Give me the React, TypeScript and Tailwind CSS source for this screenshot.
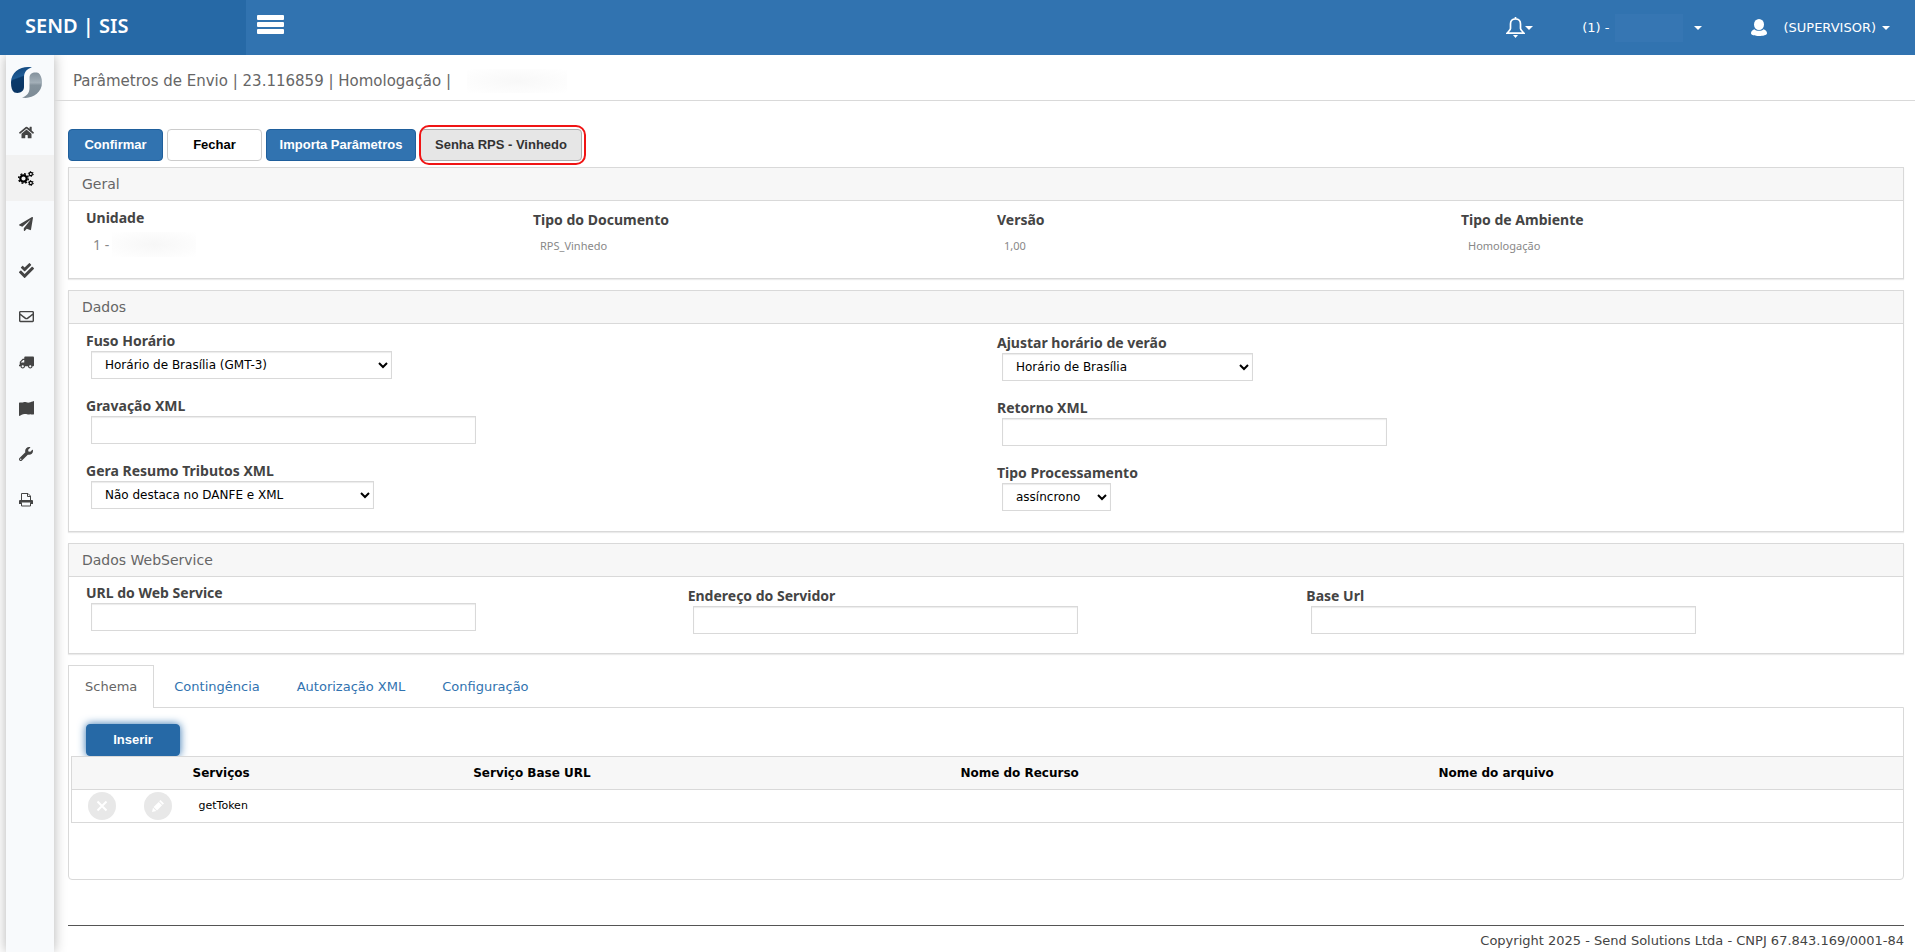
import type { ReactNode } from "react";
import {
  FaCheckDouble,
  FaHome,
  FaPaperPlane,
  FaRegEnvelope,
  FaTruck,
  FaWrench,
} from "react-icons/fa";

const verdana = "font-['Verdana','DejaVu_Sans',sans-serif]";
const labelText =
  "block font-['Trebuchet_MS','Noto_Sans',sans-serif] text-[14px] font-bold leading-[20px] text-[#444]";
const fieldBox =
  "ml-[5px] block h-[28px] border border-[#d9d9d9] bg-white text-[12px] text-black shadow-[inset_0_1px_1px_rgba(0,0,0,0.08)]";

function Caret() {
  return (
    <svg viewBox="0 0 8 4" className="h-[4px] w-[8px] shrink-0" fill="currentColor" aria-hidden="true">
      <path d="M0 0h8L4 4z" />
    </svg>
  );
}

function BrandLogo() {
  return (
    <svg viewBox="0 0 62 62" className="h-[31px] w-[31px]" aria-hidden="true">
      <defs>
        <linearGradient id="blue" x1="0" y1="0" x2="0.3" y2="1">
          <stop offset="0" stopColor="#0d3f73" />
          <stop offset="0.45" stopColor="#1f5c96" />
          <stop offset="0.5" stopColor="#0a3a6b" />
          <stop offset="1" stopColor="#0a3563" />
        </linearGradient>
        <linearGradient id="grey" x1="0" y1="0" x2="0" y2="1">
          <stop offset="0" stopColor="#83919c" />
          <stop offset="0.4" stopColor="#a3afb8" />
          <stop offset="0.5" stopColor="#84929c" />
          <stop offset="1" stopColor="#7d8b96" />
        </linearGradient>
      </defs>
      <path
        d="M42 1C22-3 0 9 0 31c0 10 2 17 7 20 10 3 19-2 19-11V21C26 10 32 3 42 1z"
        fill="url(#blue)"
      />
      <path
        d="M22 61c18 4 40-8 40-30 0-9-3-16-7-19-10-3-18 1-18 9v21c0 10-6 17-15 19z"
        fill="url(#grey)"
      />
    </svg>
  );
}

function GearsIcon() {
  return (
    <svg viewBox="0 0 16 15" className="h-[15px] w-[16px]" fill="none" stroke="currentColor" aria-hidden="true">
      <circle cx="5.500" cy="7.500" r="3.200" strokeWidth="2.200" />
      <circle cx="5.500" cy="7.500" r="4.800" strokeWidth="1.500" strokeDasharray="1.900 1.870" />
      <circle cx="12.800" cy="3" r="1.600" strokeWidth="1.200" />
      <circle cx="12.800" cy="3" r="2.500" strokeWidth="1" strokeDasharray="1.300 1.318" />
      <circle cx="12.800" cy="12" r="1.600" strokeWidth="1.200" />
      <circle cx="12.800" cy="12" r="2.500" strokeWidth="1" strokeDasharray="1.300 1.318" />
    </svg>
  );
}

function MapIcon() {
  return (
    <svg viewBox="0 0 15 15" className="h-[15px] w-[15px]" fill="currentColor" aria-hidden="true">
      <path d="M0 1.800C2 1 3 2 4.500 1.200 6 .3 8 2 10 1.600S13 .5 15 0v13.200c-2 .8-3-.4-4.500.2S7.500 12.600 5.500 13 2 14.200 0 15z" />
    </svg>
  );
}

function PrintIcon() {
  return (
    <svg viewBox="0 0 14 14" className="h-[14px] w-[14px]" fill="none" stroke="currentColor" aria-hidden="true">
      <path d="M2.500 7V.5h6.500l2.500 2.500v4M8.500.5V3.500h3" />
      <path d="M0 11V7.500L1 7h12l1 .5V11h-2.500V9.500h-9V11z" fill="currentColor" stroke="none" />
      <path d="M2.500 9.500v3.500h9V9.500" />
    </svg>
  );
}

function BellIcon() {
  return (
    <svg viewBox="0 0 19 21" className="h-[21px] w-[19px]" fill="none" stroke="currentColor" strokeWidth="1.700" aria-hidden="true">
      <path d="M9.500 2C6.500 2 4.500 4 4.500 7v4.500c0 1.500-1.800 2.500-3.500 4.700h17c-1.700-2.200-3.500-3.200-3.500-4.700V7c0-3-2-5-5-5z" />
      <path d="M9.500 0v2" />
      <path d="M7 18h5l-2.500 3z" fill="currentColor" stroke="none" />
    </svg>
  );
}

function UserIcon() {
  return (
    <svg viewBox="0 0 16 17" className="h-[17px] w-[16px]" fill="currentColor" aria-hidden="true">
      <ellipse cx="8" cy="5.500" rx="5" ry="5.500" />
      <path d="M3.500 10.200C5 12.300 11 12.300 12.500 10.200 15 11 16 12.500 16 14.200 16 16 12 17 8 17s-8-1-8-2.800c0-1.700 1-3.200 3.500-4z" />
    </svg>
  );
}

const menu = [
  { name: "Início", icon: <FaHome size={15} /> },
  { name: "Parâmetros", icon: <GearsIcon />, active: true },
  { name: "Envio", icon: <FaPaperPlane size={14} /> },
  { name: "Validação", icon: <FaCheckDouble size={15} /> },
  { name: "E-mail", icon: <FaRegEnvelope size={15} /> },
  { name: "Transporte", icon: <FaTruck size={15} className="-scale-x-100" /> },
  { name: "Mapa", icon: <MapIcon /> },
  { name: "Ferramentas", icon: <FaWrench size={14} /> },
  { name: "Impressão", icon: <PrintIcon /> },
];

function Sidebar() {
  return (
    <aside className="ml-[6px] w-[48px] shrink-0 bg-[#f8fafc] shadow-[0_0_12px_rgba(0,0,0,0.3)]">
      <div className="flex h-[54px] items-center pl-[5px]">
        <BrandLogo />
      </div>
      <nav>
        {menu.map((item) => (
          <a
            key={item.name}
            href="#"
            aria-label={item.name}
            className={
              item.active
                ? "flex h-[46px] items-center justify-center bg-[#f2f2f2] pr-[8px] text-black"
                : "flex h-[46px] items-center justify-center pr-[8px] text-[#444]"
            }
          >
            {item.icon}
          </a>
        ))}
      </nav>
    </aside>
  );
}

function Header() {
  return (
    <header className="relative z-10 flex h-[55px] items-center bg-[#3173b0] text-[13px] text-white">
      <a
        href="#"
        className="flex h-full w-[246px] items-center bg-[#2669a6] pb-[3px] pl-[25px] font-['Trebuchet_MS','Noto_Sans',sans-serif] text-[20px] font-semibold"
      >
        SEND | SIS
      </a>
      <button type="button" aria-label="Alternar menu" className="mb-[7px] ml-[11px] flex flex-col gap-[2px]">
        <span className="h-[5px] w-[27px] rounded-[1px] bg-white" />
        <span className="h-[5px] w-[27px] rounded-[1px] bg-white" />
        <span className="h-[5px] w-[27px] rounded-[1px] bg-white" />
      </button>
      <div className="ml-auto flex items-center pr-[25px]">
        <button type="button" aria-label="Notificações" className="mr-[49px] flex items-center">
          <BellIcon />
          <Caret />
        </button>
        <button type="button" className="mr-[49px] flex items-center">
          <span className="whitespace-nowrap">(1) -</span>
          <span className="mr-[11px] ml-[6px] h-[28px] w-[68px] bg-[#3676b3]" />
          <Caret />
        </button>
        <button type="button" className="flex items-center">
          <UserIcon />
          <span className="mr-[6px] ml-[16px]">(SUPERVISOR)</span>
          <Caret />
        </button>
      </div>
    </header>
  );
}

function Panel({ title, children }: { title: string; children: ReactNode }) {
  return (
    <section className="mb-[11px] overflow-hidden border border-[#d9d9d9] bg-white shadow-[0_1px_1px_rgba(0,0,0,0.08)]">
      <h2 className="flex h-[33px] items-center border-b border-[#d9d9d9] bg-[#f7f7f7] pl-[13px] text-[14px] text-[#666]">
        {title}
      </h2>
      <div className="-mr-[22px]">{children}</div>
    </section>
  );
}

function TextField({ id, label }: { id: string; label: string }) {
  return (
    <div>
      <label htmlFor={id} className={labelText}>
        {label}
      </label>
      <input id={id} type="text" className={`${fieldBox} w-[385px] px-[10px]`} />
    </div>
  );
}

function SelectField({ id, label, value, width }: { id: string; label: string; value: string; width: string }) {
  return (
    <div>
      <label htmlFor={id} className={labelText}>
        {label}
      </label>
      <select id={id} className={`${fieldBox} ${width} pl-[9px]`}>
        <option>{value}</option>
      </select>
    </div>
  );
}

function Info({ label, children }: { label: string; children: ReactNode }) {
  return (
    <dl>
      <dt className={labelText}>{label}</dt>
      <dd className="mt-[6px] flex h-[20px] items-center pl-[7px] font-['Trebuchet_MS','Noto_Sans',sans-serif] text-[11px] text-[#888]">
        {children}
      </dd>
    </dl>
  );
}

const blueButton =
  "h-[32px] rounded-[4px] border border-[#1f5f9c] bg-[#3173b0] text-white";

const tabs = ["Contingência", "Autorização XML", "Configuração"];

export default function App() {
  return (
    <div className={`flex min-h-screen flex-col bg-white ${verdana}`}>
      <Header />
      <div className="flex flex-1">
        <Sidebar />
        <div className="flex min-w-0 flex-1 flex-col">
          <div className="flex h-[46px] items-center border-b border-[#d9d9d9] pt-[7px] pl-[19px]">
            <h1 className="whitespace-nowrap text-[15px] text-[#666]">
              Parâmetros de Envio | 23.116859 | Homologação |
            </h1>
            <span className="ml-[16px] h-[24px] w-[100px] bg-radial from-[#f8f8f8] to-white" />
          </div>
          <main className="flex-1 pt-[28px] pr-[11px] pl-[14px]">
            <div className="mb-[6px] flex gap-[4px] font-['Arial','Liberation_Sans',sans-serif] text-[13px] font-bold">
              <button type="button" className={`${blueButton} w-[95px]`}>
                Confirmar
              </button>
              <button type="button" className="w-[95px] rounded-[4px] border border-[#ccc] bg-white text-black">
                Fechar
              </button>
              <button type="button" className={`${blueButton} w-[150px]`}>
                Importa Parâmetros
              </button>
              <button
                type="button"
                className="relative w-[162px] rounded-[4px] border border-[#adadad] bg-[#e6e6e6] text-[#333]"
              >
                Senha RPS - Vinhedo
                <span className="absolute -top-[5px] -right-[5px] -bottom-[5px] -left-[2px] rounded-[10px] border-2 border-[#f01414]" />
              </button>
            </div>

            <Panel title="Geral">
              <div className="grid grid-cols-4 pt-[7px] pb-[22px]">
                <div className="pl-[17px]">
                  <Info label="Unidade">
                    <span className="text-[14px]">1 -</span>
                    <span className="ml-[3px] h-[25px] w-[84px] bg-radial from-[#f7f7f7] to-white" />
                  </Info>
                </div>
                <div className="pt-[2px]">
                  <Info label="Tipo do Documento">RPS_Vinhedo</Info>
                </div>
                <div className="pt-[2px]">
                  <Info label="Versão">1,00</Info>
                </div>
                <div className="pt-[2px]">
                  <Info label="Tipo de Ambiente">Homologação</Info>
                </div>
              </div>
            </Panel>

            <Panel title="Dados">
              <div className="grid grid-cols-2 pt-[7px] pb-[20px]">
                <div className="flex flex-col gap-[17px] pl-[17px]">
                  <SelectField id="fuso" label="Fuso Horário" value="Horário de Brasília (GMT-3)" width="w-[301px]" />
                  <TextField id="gravacao" label="Gravação XML" />
                  <SelectField id="resumo" label="Gera Resumo Tributos XML" value="Não destaca no DANFE e XML" width="w-[283px]" />
                </div>
                <div className="flex flex-col gap-[17px] pt-[2px]">
                  <SelectField id="verao" label="Ajustar horário de verão" value="Horário de Brasília" width="w-[251px]" />
                  <TextField id="retorno" label="Retorno XML" />
                  <SelectField id="processamento" label="Tipo Processamento" value="assíncrono" width="w-[109px]" />
                </div>
              </div>
            </Panel>

            <Panel title="Dados WebService">
              <div className="grid grid-cols-3 pt-[6px] pb-[19px]">
                <div className="pl-[17px]">
                  <TextField id="url" label="URL do Web Service" />
                </div>
                <div className="pt-[3px]">
                  <TextField id="servidor" label="Endereço do Servidor" />
                </div>
                <div className="pt-[3px]">
                  <TextField id="base" label="Base Url" />
                </div>
              </div>
            </Panel>

            <div role="tablist" className="relative -mb-px flex items-stretch gap-[3px] text-[13px]">
              <button
                type="button"
                role="tab"
                aria-selected="true"
                className="h-[43px] border border-b-0 border-[#d9d9d9] bg-white px-[16px] text-[#666]"
              >
                Schema
              </button>
              {tabs.map((tab) => (
                <button key={tab} type="button" role="tab" aria-selected="false" className="px-[17px] text-[#3173b0]">
                  {tab}
                </button>
              ))}
            </div>
            <div className="min-h-[173px] rounded-b-[4px] border border-[#d9d9d9] pt-[16px] pl-[2px]">
              <button
                type="button"
                className="ml-[15px] block h-[32px] w-[94px] rounded-[4px] border border-[#2669a6] bg-[#2669a6] font-['Arial','Liberation_Sans',sans-serif] text-[13px] font-bold text-white shadow-[0_0_8px_#3173b0]"
              >
                Inserir
              </button>
              <table className="relative w-full table-fixed border-collapse border border-r-0 border-[#d9d9d9] bg-white text-left text-black">
                <colgroup>
                  <col className="w-[56px]" />
                  <col className="w-[60px]" />
                  <col className="w-[15.6%]" />
                  <col className="w-[26.6%]" />
                  <col className="w-[26.1%]" />
                  <col />
                </colgroup>
                <thead className="bg-[#f7f7f7] text-[12px] font-bold">
                  <tr className="h-[33px] border-b border-[#d9d9d9]">
                    <td />
                    <td />
                    <th className="pl-[5px]">Serviços</th>
                    <th>Serviço Base URL</th>
                    <th>Nome do Recurso</th>
                    <th>Nome do arquivo</th>
                  </tr>
                </thead>
                <tbody className="bg-white text-[11px]">
                  <tr className="h-[33px]">
                    <td className="pl-[16px]">
                      <button type="button" aria-label="Excluir" className="flex h-[28px] w-[28px] items-center justify-center rounded-full bg-[#e8e8e8] text-white">
                        <svg viewBox="0 0 12 12" className="h-[12px] w-[12px]" fill="none" stroke="currentColor" strokeWidth="2" aria-hidden="true">
                          <path d="M1.500 1.500l9 9M10.500 1.500l-9 9" />
                        </svg>
                      </button>
                    </td>
                    <td className="pl-[16px]">
                      <button type="button" aria-label="Editar" className="flex h-[28px] w-[28px] items-center justify-center rounded-full bg-[#e8e8e8] text-white">
                        <svg viewBox="0 0 12 12" className="h-[12px] w-[12px]" fill="currentColor" aria-hidden="true">
                          <path d="M8.500 0L12 3.500 10.700 4.800 7.200 1.300zM6.700 1.900L10.100 5.300 5 10.400 1.600 7zM1 7.700l3.300 3.300L0 12z" />
                        </svg>
                      </button>
                    </td>
                    <td className="pl-[11px]">getToken</td>
                    <td />
                    <td />
                    <td />
                  </tr>
                </tbody>
              </table>
            </div>
          </main>
          <footer className="mr-[11px] ml-[14px] border-t border-[#555] pt-[5px] pb-[2px] text-right text-[13px] leading-[19px] text-[#444]">
            Copyright 2025 - Send Solutions Ltda - CNPJ 67.843.169/0001-84
          </footer>
        </div>
      </div>
    </div>
  );
}
